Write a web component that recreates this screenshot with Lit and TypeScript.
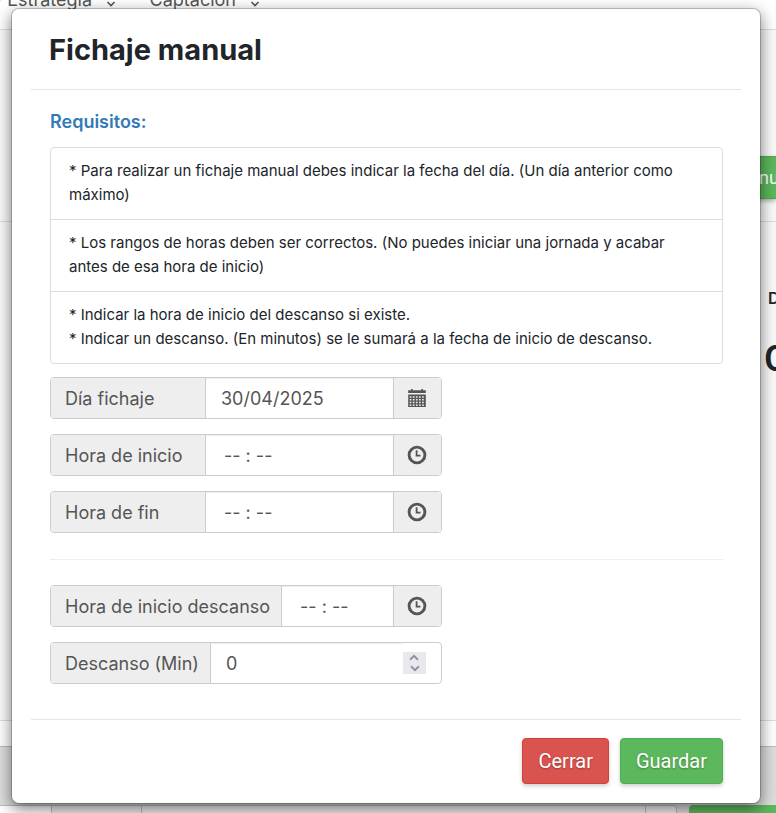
import { LitElement, html, css, svg } from "lit";
import { customElement, property } from "lit/decorators.js";

const clockIcon = html`<svg class="icon" viewBox="0 0 20 20" aria-hidden="true">
  <circle cx="10" cy="10" r="7.9" fill="none" stroke="currentColor" stroke-width="2.9" />
  <path d="M9.6 5.3v5.4h3.9" fill="none" stroke="currentColor" stroke-width="1.8" />
</svg>`;

const cells = [0, 1, 2, 3].flatMap((r) =>
  [0, 1, 2, 3, 4].map(
    (c) => svg`<rect x=${2.7 + c * 3.1} y=${8.3 + r * 2.7} width="1.7" height="1.5" fill="#eee" />`
  )
);

const calendarIcon = html`<svg class="icon" viewBox="0 0 20 20" aria-hidden="true">
  <path
    d="M1.2 2.2H4V1h1.6v1.2h8.8V1H16v1.2h2.8V5H1.2zM1.2 6.6h17.6V19H1.2z"
    fill="currentColor"
  />
  ${cells}
</svg>`;

const chevron = html`<svg class="chev" viewBox="0 0 10 8" aria-hidden="true">
  <path d="M1.5 2l3.5 3.5L8.5 2" fill="none" stroke="currentColor" stroke-width="1.6" />
</svg>`;

@customElement("page-backdrop")
export class PageBackdrop extends LitElement {
  static styles = css`
    :host {
      display: block;
      color: #212529;
      font-family: Inter, "Liberation Sans", sans-serif;
    }
    .nav {
      display: flex;
      align-items: flex-end;
      box-sizing: border-box;
      height: 30px;
      padding-bottom: 18px;
      border-bottom: 1px solid #ddd;
      background: #fff;
      overflow: hidden;
    }
    .link {
      display: flex;
      flex: none;
      align-items: center;
      justify-content: flex-end;
      gap: 14px;
      color: #555;
      font-size: 18px;
      line-height: 22px;
      text-decoration: none;
      white-space: nowrap;
    }
    .first {
      width: 116px;
    }
    .second {
      width: 144px;
    }
    .chev {
      flex: none;
      width: 10px;
      height: 8px;
      margin-top: 8px;
    }
    .bar {
      display: flex;
      justify-content: flex-end;
      align-items: flex-end;
      box-sizing: border-box;
      height: 192px;
      padding-bottom: 22px;
      border-bottom: 1px solid #ddd;
      background: #fafafa;
    }
    .action {
      width: 70px;
      height: 43px;
      padding: 0 0 0 52px;
      border: 1px solid #4cae4c;
      border-right: 0;
      border-radius: 4px 0 0 4px;
      background: #5cb85c;
      color: #fff;
      font: 18px Roboto, sans-serif;
      text-align: left;
      overflow: hidden;
      box-shadow: 0 2px 4px rgba(0, 0, 0, 0.3);
    }
    .summary {
      display: flex;
      flex-direction: column;
      align-items: flex-end;
      box-sizing: border-box;
      height: 499px;
      padding-top: 64px;
      border-bottom: 1px solid #ddd;
      background: #fafafa;
    }
    .label,
    .count {
      width: 8px;
      font-size: 16px;
      font-weight: 600;
      line-height: 24px;
      overflow: hidden;
    }
    .count {
      width: 12px;
      margin-top: 24px;
      font-size: 36px;
      line-height: 48px;
    }
    .strip {
      height: 25px;
      border-bottom: 1px solid #bbb;
      background: #fff;
    }
    .foot {
      height: 58px;
      background: #ddd;
    }
    .fields {
      display: grid;
      grid-template-columns: 52px 90px 1fr 31px 12px 87px;
      height: 20px;
      background: #ddd;
    }
    .cell {
      border: 1px solid #bbb;
      border-left: 0;
      background: #eee;
    }
    .plain {
      background: #fff;
    }
    .last {
      border-radius: 0 4px 0 0;
    }
    .green {
      border-radius: 4px 0 0 0;
      background: #5cb85c;
    }
  `;

  render() {
    return html`
      <nav class="nav">
        <a class="link first" href="#">y Estrategia ${chevron}</a>
        <a class="link second" href="#">Captación ${chevron}</a>
      </nav>
      <div class="bar"><button class="action" type="button">nu</button></div>
      <div class="summary">
        <div class="label">D</div>
        <div class="count">0</div>
      </div>
      <div class="strip"></div>
      <div class="foot"></div>
      <div class="fields">
        <div class="cell plain"></div>
        <div class="cell"></div>
        <div class="cell"></div>
        <div class="cell last"></div>
        <div></div>
        <div class="green"></div>
      </div>
    `;
  }
}

@customElement("form-row")
export class FormRow extends LitElement {
  @property() label = "";
  @property() value = "";
  @property() kind: "date" | "time" | "number" = "time";

  static styles = css`
    :host {
      display: block;
      max-width: 392px;
    }
    .group {
      display: flex;
      box-sizing: border-box;
      height: 42px;
      border: 1px solid #ccc;
      border-radius: 4px;
      color: #555;
      font-size: 18px;
      background: #fff;
      overflow: hidden;
    }
    .name {
      display: flex;
      flex: none;
      align-items: center;
      box-sizing: border-box;
      min-width: var(--name-width, 0);
      padding: 0 11px 0 14px;
      border-right: 1px solid #ccc;
      background: #eee;
    }
    .input {
      flex: 1;
      min-width: 0;
      box-sizing: border-box;
      padding: 0 15px;
      border: 0;
      background: transparent;
      box-shadow: inset 0 1px 1px rgba(0, 0, 0, 0.075);
      color: inherit;
      font: inherit;
      appearance: textfield;
    }
    .time {
      padding-left: 18px;
    }
    .input::-webkit-inner-spin-button {
      appearance: none;
      margin: 0;
    }
    .addon {
      display: flex;
      flex: none;
      align-items: center;
      justify-content: center;
      box-sizing: border-box;
      width: 48px;
      padding: 0 2px 0 0;
      border: 0;
      border-left: 1px solid #ccc;
      background: #eee;
      color: #555;
    }
    .icon {
      width: 20px;
      height: 20px;
    }
    .spin {
      display: flex;
      flex-direction: column;
      align-self: center;
      width: 23px;
      margin-right: 15px;
      background: #e9e9ed;
      color: #8f8f9d;
    }
    .step {
      display: flex;
      align-items: center;
      justify-content: center;
      height: 11px;
      padding: 0;
      border: 0;
      background: none;
      color: inherit;
    }
    .chev {
      width: 12px;
      height: 9px;
    }
    .up {
      transform: rotate(180deg);
    }
  `;

  render() {
    const isNumber = this.kind === "number";
    return html`
      <div class="group">
        <label class="name" for="field">${this.label}</label>
        <input
          id="field"
          class="input ${this.kind}"
          type=${isNumber ? "number" : "text"}
          .value=${this.value}
        />
        ${isNumber
          ? html`<div class="spin">
              <button class="step up" type="button" aria-label="Más">${chevron}</button>
              <button class="step" type="button" aria-label="Menos">${chevron}</button>
            </div>`
          : html`<button class="addon" type="button" aria-label="Elegir">
              ${this.kind === "date" ? calendarIcon : clockIcon}
            </button>`}
      </div>
    `;
  }
}

@customElement("app-root")
export class AppRoot extends LitElement {
  static styles = css`
    :host {
      display: block;
      position: relative;
      height: 100vh;
      overflow: hidden;
      color: #212529;
      font-family: Inter, "Liberation Sans", sans-serif;
    }
    .modal {
      position: absolute;
      top: 8px;
      left: 11px;
      right: 15px;
      box-sizing: border-box;
      padding: 0 19px;
      border: 1px solid rgba(0, 0, 0, 0.2);
      border-radius: 8px;
      background: #fff;
      background-clip: padding-box;
      box-shadow: 0 5px 15px rgba(0, 0, 0, 0.5);
    }
    .head {
      padding: 20px 18px 19px;
      border-bottom: 1px solid #e5e5e5;
    }
    .title {
      margin: 0;
      font-size: 29px;
      font-weight: 700;
      line-height: 41px;
    }
    .body {
      padding: 20px 18px 35px 19px;
    }
    .subtitle {
      margin: 0 0 13px;
      color: #337ab7;
      font-size: 18px;
      font-weight: 600;
      line-height: 24px;
    }
    .list {
      margin: 0 0 13px;
      padding: 0;
      border: 1px solid #ddd;
      border-radius: 4px;
      list-style: none;
      font-size: 15px;
      line-height: 24px;
    }
    .item {
      padding: 11px 18px 12px;
    }
    .item + .item {
      border-top: 1px solid #ddd;
    }
    .rows {
      display: grid;
      gap: 15px;
    }
    .day {
      --name-width: 155px;
    }
    .rule {
      margin: 26px 0 25px;
      border: 0;
      border-top: 1px solid #eee;
    }
    .foot {
      display: flex;
      justify-content: flex-end;
      gap: 11px;
      padding: 18px 18px 19px;
      border-top: 1px solid #e5e5e5;
    }
    .btn {
      height: 46px;
      padding: 0 15px;
      border: 1px solid #d43f3a;
      border-radius: 4px;
      background: #d9534f;
      color: #fff;
      font: 20px Roboto, sans-serif;
      text-shadow: 0 1px 2px rgba(0, 0, 0, 0.3);
      box-shadow: 0 2px 4px rgba(0, 0, 0, 0.2);
    }
    .save {
      border-color: #4cae4c;
      background: #5cb85c;
    }
  `;

  render() {
    return html`
      <page-backdrop></page-backdrop>
      <div class="modal" role="dialog" aria-labelledby="title">
        <header class="head"><h1 class="title" id="title">Fichaje manual</h1></header>
        <div class="body">
          <h2 class="subtitle">Requisitos:</h2>
          <ul class="list">
            <li class="item">
              * Para realizar un fichaje manual debes indicar la fecha del día. (Un día anterior
              como máximo)
            </li>
            <li class="item">
              * Los rangos de horas deben ser correctos. (No puedes iniciar una jornada y acabar
              antes de esa hora de inicio)
            </li>
            <li class="item">
              * Indicar la hora de inicio del descanso si existe.<br />
              * Indicar un descanso. (En minutos) se le sumará a la fecha de inicio de descanso.
            </li>
          </ul>
          <div class="rows day">
            <form-row label="Día fichaje" value="30/04/2025" kind="date"></form-row>
            <form-row label="Hora de inicio" value="-- : --"></form-row>
            <form-row label="Hora de fin" value="-- : --"></form-row>
          </div>
          <hr class="rule" />
          <div class="rows">
            <form-row label="Hora de inicio descanso" value="-- : --"></form-row>
            <form-row label="Descanso (Min)" value="0" kind="number"></form-row>
          </div>
        </div>
        <footer class="foot">
          <button class="btn" type="button">Cerrar</button>
          <button class="btn save" type="button">Guardar</button>
        </footer>
      </div>
    `;
  }
}
